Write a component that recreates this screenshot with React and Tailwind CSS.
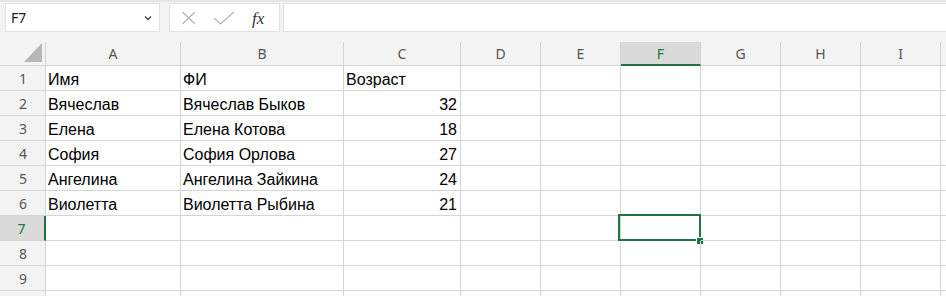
import React from "react";

const cols = [
  { l: "A", w: 135 },
  { l: "B", w: 163 },
  { l: "C", w: 117 },
  { l: "D", w: 80 },
  { l: "E", w: 80 },
  { l: "F", w: 80 },
  { l: "G", w: 80 },
  { l: "H", w: 80 },
  { l: "I", w: 80 },
];

const data = [
  ["Имя", "ФИ", "Возраст"],
  ["Вячеслав", "Вячеслав Быков", "32"],
  ["Елена", "Елена Котова", "18"],
  ["София", "София Орлова", "27"],
  ["Ангелина", "Ангелина Зайкина", "24"],
  ["Виолетта", "Виолетта Рыбина", "21"],
];

const cellFont = { fontFamily: '"Liberation Sans", Arial, sans-serif' };
const uiFont = { fontFamily: '"Noto Sans", "Open Sans", sans-serif' };

export default function App() {
  const rows = Array.from({ length: 10 }, (_, i) => i + 1);
  return (
    <div className="w-[946px] h-[296px] overflow-hidden bg-white relative">
      {/* Top bar */}
      <div className="h-[42px] bg-[#f3f3f3] border-t-2 border-[#e6e6e6] flex items-start pt-[1px]">
        <div
          className="ml-[5px] w-[155px] h-[29px] bg-white border border-[#e1e1e1] flex items-center justify-between pl-[5px] pr-[6px]"
          style={uiFont}
        >
          <span className="text-[14px] text-[#222]">F7</span>
          <svg width="8" height="6" viewBox="0 0 8 6" className="mr-[1px]">
            <path d="M1 1.5 L4 4.5 L7 1.5" fill="none" stroke="#444" strokeWidth="1.4" />
          </svg>
        </div>
        <div className="ml-[9px] w-[111px] h-[29px] bg-white border border-[#e1e1e1] flex items-center relative">
          <svg width="16" height="14" viewBox="0 0 16 14" className="absolute left-[11px] top-[7px]">
            <path d="M1.5 1 L14 13 M14 1 L1.5 13" fill="none" stroke="#b3b3b3" strokeWidth="1.2" />
          </svg>
          <svg width="22" height="14" viewBox="0 0 22 14" className="absolute left-[43px] top-[7px]">
            <path d="M1 7 L7.5 13 L21 1" fill="none" stroke="#b3b3b3" strokeWidth="1.2" />
          </svg>
          <span
            className="absolute left-[82px] top-[2px] text-[17px] italic text-[#333]"
            style={{ fontFamily: '"Liberation Serif", "Times New Roman", serif' }}
          >
            fx
          </span>
        </div>
        <div className="ml-[3px] flex-1 h-[29px] bg-white border-l border-t border-b border-[#e1e1e1]" />
      </div>

      {/* Column header row */}
      <div className="flex h-[24px] bg-[#f3f3f3]">
        <div className="w-[46px] shrink-0 h-full border-r border-b border-[#d4d4d4] relative">
          <svg width="19" height="20" viewBox="0 0 19 20" className="absolute left-[24px] top-[1px]">
            <path d="M18 0 L18 19 L0 19 Z" fill="#b7b7b7" />
          </svg>
        </div>
        {cols.map((c) => {
          const sel = c.l === "F";
          return (
            <div
              key={c.l}
              className={
                sel
                  ? "shrink-0 h-full border-r border-b-2 border-r-[#d4d4d4] border-b-[#217346] bg-[#dadada] text-[#217346] flex items-center justify-center text-[14px] relative"
                  : "shrink-0 h-full border-r border-b border-[#d4d4d4] text-[#555] flex items-center justify-center text-[14px]"
              }
              style={{ width: c.w, ...uiFont }}
            >
              {c.l}
            </div>
          );
        })}
        <div className="flex-1 h-full border-b border-[#d4d4d4]" />
      </div>

      {/* Data rows */}
      {rows.map((r) => {
        const rowData = data[r - 1];
        const selRow = r === 7;
        return (
          <div key={r} className="flex h-[25px]">
            <div
              className={
                selRow
                  ? "w-[46px] shrink-0 h-full bg-[#dadada] border-b border-b-[#d4d4d4] border-r-2 border-r-[#217346] text-[#217346] flex items-center justify-center text-[14px] pr-[1px]"
                  : "w-[46px] shrink-0 h-full bg-[#f3f3f3] border-b border-r border-[#d4d4d4] text-[#555] flex items-center justify-center text-[14px] pl-[1px]"
              }
              style={uiFont}
            >
              {r < 10 ? r : ""}
            </div>
            {cols.map((c, ci) => {
              const val = rowData && ci < 3 ? rowData[ci] : "";
              const right = r > 1 && ci === 2;
              const selected = selRow && c.l === "F";
              return (
                <div
                  key={c.l}
                  className={
                    "shrink-0 h-full border-r border-b border-[#d4d4d4] flex items-end pb-[1px] text-[16px] leading-[18px] text-black relative whitespace-nowrap " +
                    (right ? "justify-end pr-[3px]" : "pl-[2px]")
                  }
                  style={{ width: c.w, ...cellFont }}
                >
                  {val}
                  {selected && (
                    <>
                      <div className="absolute left-[-3px] top-[-2px] w-[83px] h-[27px] border-2 border-[#217346]" />
                      <div className="absolute left-[75px] top-[21px] w-[8px] h-[8px] bg-[#217346] border border-white" />
                    </>
                  )}
                </div>
              );
            })}
            <div className="flex-1 h-full border-b border-[#d4d4d4]" />
          </div>
        );
      })}
    </div>
  );
}
